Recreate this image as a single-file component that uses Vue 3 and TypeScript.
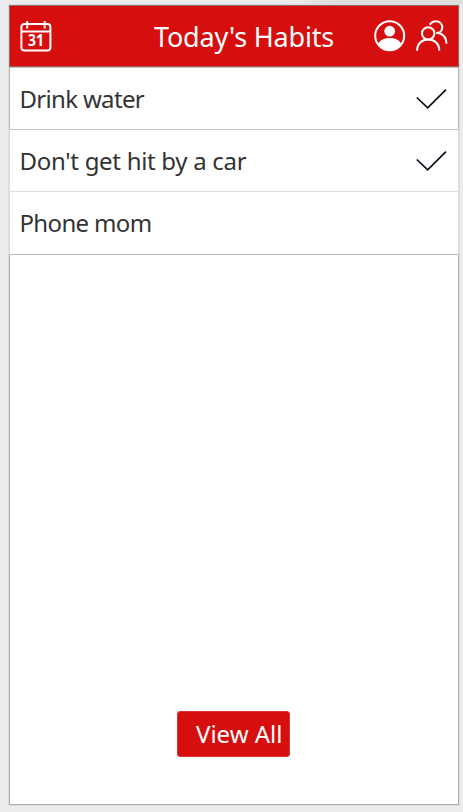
<script setup lang="ts">
interface Habit {
  name: string
  done: boolean
  tracking: number
}

const habits: Habit[] = [
  { name: 'Drink water', done: true, tracking: -0.68 },
  { name: "Don't get hit by a car", done: true, tracking: -0.3 },
  { name: 'Phone mom', done: false, tracking: -0.65 },
]
</script>

<template>
  <div class="page">
    <main class="screen">
      <header class="bar">
        <svg class="calendar" viewBox="0 0 32 32" fill="none" stroke="#fff">
          <rect x="1.4" y="4" width="29" height="26.4" rx="3" stroke-width="2" />
          <path d="M1.400 11.5H30.400M7.200 1V8.500M24.700 1V8.500" stroke-width="2" />
          <text x="8" y="26" textLength="16" lengthAdjust="spacingAndGlyphs">31</text>
        </svg>
        <h1>Today's Habits</h1>
        <svg class="user" viewBox="0 0 32 32">
          <circle cx="15.700" cy="15.700" r="14.500" fill="none" stroke="#fff" stroke-width="2" />
          <circle cx="15.700" cy="11.200" r="5.400" fill="#fff" />
          <path d="M4 24.500C5.500 20.300 9.500 18 15.700 18S26 20.300 27.400 24.500C24.500 28.500 20.200 30.400 15.700 30.400S7 28.500 4 24.500Z" fill="#fff" />
        </svg>
        <svg class="people" viewBox="0 0 32 32" fill="none" stroke="#fff" stroke-width="2">
          <circle cx="12.200" cy="13.400" r="6.200" />
          <path d="M1.100 30.700C1.100 23.700 5.800 19.600 12.200 19.600S23.300 23.700 23.300 30.700" />
          <path d="M13.800 4.700C15.100 2.600 17.300 1.300 20.100 1.300C23.800 1.300 26.300 4.100 26.300 7.200C26.300 10.700 23.800 13.100 20.200 13.100M22.300 12.900C27.300 14 30.500 18 30.500 23.700" />
        </svg>
      </header>
      <ul>
        <li v-for="habit in habits" :key="habit.name">
          <span :style="{ letterSpacing: habit.tracking + 'px' }">{{ habit.name }}</span>
          <svg v-if="habit.done" class="check" viewBox="0 0 32 22">
            <path d="M0.800 9.500L11.700 19.900L30 1.700" fill="none" stroke="#08101c" stroke-width="1.700" />
          </svg>
        </li>
      </ul>
      <footer>
        <button type="button">View All</button>
      </footer>
    </main>
  </div>
</template>

<style>
body {
  background: #ebecee;
}
</style>

<style scoped>
.page {
  box-sizing: border-box;
  height: 812px;
  padding: 5px 4px 7px 9px;
  font-family: "Noto Sans", "Open Sans", sans-serif;
  background: linear-gradient(90deg, transparent 290px, #dedede 335px) 0 0 / 100% 4px no-repeat, #ebecee;
}
.screen {
  box-sizing: border-box;
  display: flex;
  flex-direction: column;
  height: 800px;
  border: 1px solid #adadad;
  background: #fff;
  box-shadow: 0 0 0 1px #dcdddf;
}
.bar {
  box-sizing: border-box;
  display: grid;
  grid-template-columns: 32px 1fr 32px 32px;
  column-gap: 10px;
  align-items: center;
  height: 62px;
  margin: -1px -1px 0;
  padding: 0 10px;
  border: 1px solid #8f6b6b;
  border-bottom-color: #a06060;
  background: #d60e0e;
  box-shadow: 0 1px #c9c0c0;
}
.bar svg {
  width: 32px;
  height: 32px;
}
.calendar text {
  fill: #fff;
  stroke: none;
  font-size: 15.5px;
  font-weight: 700;
}
h1 {
  margin: 1px 0 0;
  padding-left: 62px;
  text-align: center;
  white-space: nowrap;
  color: #fff;
  font-size: 27px;
  font-weight: 400;
  line-height: 36px;
  letter-spacing: -0.2px;
}
ul {
  margin: 0 -1px;
  padding: 0;
  list-style: none;
}
li {
  box-sizing: border-box;
  display: flex;
  align-items: center;
  justify-content: space-between;
  height: 63px;
  padding: 0 10px;
  border: solid #dcdddf;
  border-width: 0 1px 1px;
  color: #333;
  font-size: 24px;
  line-height: 34px;
}
li:first-child {
  padding-top: 1px;
  border-color: #b8b8b8 #b8b8b8 #c4c4c4;
}
li:nth-child(2) {
  height: 62px;
}
li:last-child {
  border-bottom-color: #bbb;
}
li span {
  margin-left: -0.5px;
}
.check {
  width: 32px;
  height: 22px;
}
footer {
  display: flex;
  justify-content: center;
  margin-top: auto;
  padding: 0 1px 47px 0;
}
button {
  box-sizing: border-box;
  width: 113px;
  height: 46px;
  padding: 0 7px 0 18px;
  border: 1px solid #df3434;
  border-radius: 3px;
  background: #d60e0e;
  color: #fff;
  font: 24px/42px "Noto Sans", "Open Sans", sans-serif;
  white-space: nowrap;
}
</style>
